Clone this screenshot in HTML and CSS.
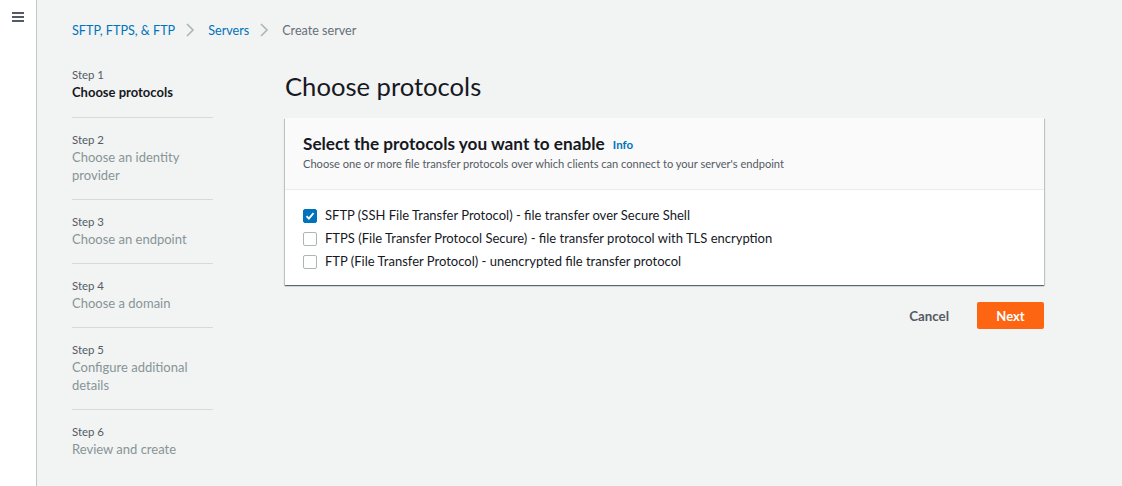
FILE: index.html
```html
<!DOCTYPE html>
<html lang="en">
<head>
<meta charset="utf-8">
<title>Create server</title>
<link rel="stylesheet" href="styles.css">
</head>
<body>
<div class="layout">
  <aside class="rail">
    <button class="menu" aria-label="Open navigation">
      <svg width="14" height="12" viewBox="0 0 14 12"><rect x="1" y="1" width="12" height="2" fill="#545b64"/><rect x="1" y="5" width="12" height="2" fill="#545b64"/><rect x="1" y="9" width="12" height="2" fill="#545b64"/></svg>
    </button>
  </aside>
  <main class="main">
    <nav class="crumbs">
      <a class="crumb-link" href="#">SFTP, FTPS, &amp; FTP</a>
      <svg class="chev" width="10" height="16" viewBox="0 0 10 16"><path d="M2 2l6 6-6 6" fill="none" stroke="#aab7b8" stroke-width="1.6"/></svg>
      <a class="crumb-link" href="#">Servers</a>
      <svg class="chev" width="10" height="16" viewBox="0 0 10 16"><path d="M2 2l6 6-6 6" fill="none" stroke="#aab7b8" stroke-width="1.6"/></svg>
      <span class="crumb-current">Create server</span>
    </nav>
    <div class="wizard">
      <ol class="steps">
        <li class="step active"><div class="step-num">Step 1</div><div class="step-title">Choose protocols</div></li>
        <li class="step"><div class="step-num">Step 2</div><div class="step-title">Choose an identity provider</div></li>
        <li class="step"><div class="step-num">Step 3</div><div class="step-title">Choose an endpoint</div></li>
        <li class="step"><div class="step-num">Step 4</div><div class="step-title">Choose a domain</div></li>
        <li class="step"><div class="step-num">Step 5</div><div class="step-title">Configure additional details</div></li>
        <li class="step"><div class="step-num">Step 6</div><div class="step-title">Review and create</div></li>
      </ol>
      <section class="content">
        <h1 class="page-title">Choose protocols</h1>
        <div class="card">
          <div class="card-head">
            <h2 class="card-title">Select the protocols you want to enable <a class="info" href="#">Info</a></h2>
            <p class="card-desc">Choose one or more file transfer protocols over which clients can connect to your server's endpoint</p>
          </div>
          <div class="card-body">
            <label class="opt"><span class="box checked"><svg width="10" height="10" viewBox="0 0 10 10"><path d="M1.5 5.2l2.4 2.4 4.6-5.4" fill="none" stroke="#fff" stroke-width="1.8"/></svg></span>SFTP (SSH File Transfer Protocol) - file transfer over Secure Shell</label>
            <label class="opt"><span class="box"></span>FTPS (File Transfer Protocol Secure) - file transfer protocol with TLS encryption</label>
            <label class="opt"><span class="box"></span>FTP (File Transfer Protocol) - unencrypted file transfer protocol</label>
          </div>
        </div>
        <div class="actions">
          <button class="btn-link">Cancel</button>
          <button class="btn-primary">Next</button>
        </div>
      </section>
    </div>
  </main>
</div>
</body>
</html>
```
FILE: styles.css
```css
* { box-sizing: border-box; }
html, body { margin: 0; padding: 0; }
body {
  font-family: Lato, "Open Sans", "Liberation Sans", sans-serif;
  background: #f2f3f3;
  color: #16191f;
  font-size: 13px;
}
.layout { display: flex; min-height: 486px; }
.rail {
  width: 37px;
  flex: none;
  background: #fff;
  border-right: 1px solid #c2c7c8;
}
.menu {
  border: 0; background: none; padding: 0;
  margin: 11px 0 0 11px;
  width: 14px; height: 12px; display: block;
}
.menu svg { display: block; }
.main { flex: 1; padding: 20px 78px 0 35px; }
.crumbs { display: flex; align-items: center; height: 20px; font-size: 12.6px; }
.crumbs .chev { margin: 0 13px 0 10px; flex: none; }
.crumb-link { color: #0073bb; text-decoration: none; }
.crumb-current { color: #687078; }
.wizard { display: flex; margin-top: 27px; }
.steps { list-style: none; margin: 0; padding: 0; width: 141px; flex: none; margin-right: 72px; }
.step { padding: 14px 0 15px; border-top: 1px solid #d5dbdb; }
.step:first-child { border-top: 0; padding-top: 0; padding-bottom: 16px; }
.step-num { font-size: 11.4px; line-height: 16px; color: #545b64; }
.step-title { font-size: 13px; line-height: 18px; color: #879596; }
.active .step-title { color: #16191f; font-weight: 700; }
.content { flex: 1; }
.page-title { font-size: 25.6px; font-weight: 400; line-height: 32px; margin: 3px 0 16px; color: #16191f; }
.card {
  background: #fff;
  box-shadow: 0 1px 1px 0 rgba(0,28,36,.5), 1px 1px 1px 0 rgba(0,28,36,.15), -1px 1px 1px 0 rgba(0,28,36,.15);
}
.card-head { background: #fafafa; border-bottom: 1px solid #eaeded; padding: 14px 18px 17px; }
.card-title { margin: 0; font-size: 17.2px; font-weight: 700; line-height: 24px; }
.info { font-size: 11.5px; line-height: 16px; font-weight: 700; color: #0073bb; text-decoration: none; margin-left: 4px; vertical-align: 1px; }
.card-desc { margin: 0; font-size: 11.1px; line-height: 16px; color: #545b64; }
.card-body { padding: 14px 18px 12px; }
.opt { display: flex; align-items: center; height: 23px; line-height: 23px; font-size: 13px; color: #16191f; }
.box {
  width: 14px; height: 14px; border: 1px solid #aab7b8; border-radius: 2px;
  margin-right: 8px; display: flex; align-items: center; justify-content: center; background: #fff; flex: none;
}
.box.checked { background: #0073bb; border-color: #0073bb; }
.actions { display: flex; justify-content: flex-end; align-items: center; margin-top: 17px; gap: 8px; }
.btn-link { background: none; border: 0; font: inherit; font-weight: 700; font-size: 13.3px; color: #545b64; padding: 4px 20px; }
.btn-primary {
  background: #fd6513; color: #fff; border: 0; border-radius: 2px;
  font: inherit; font-weight: 700; font-size: 13px; width: 67px; height: 27px;
}
```
